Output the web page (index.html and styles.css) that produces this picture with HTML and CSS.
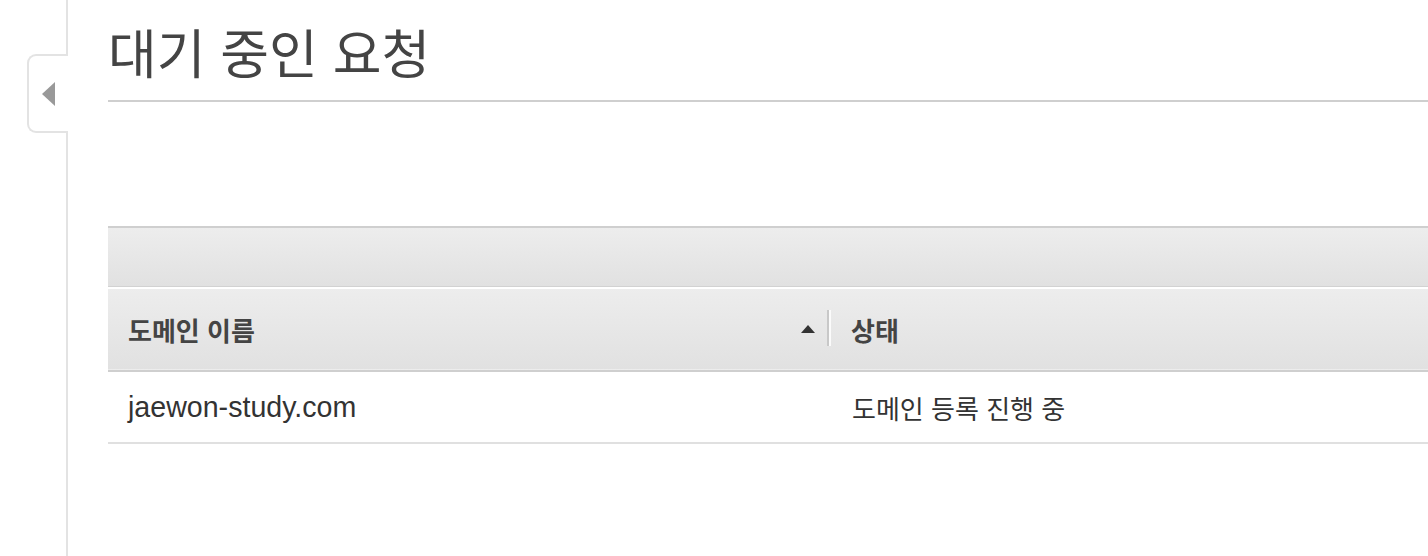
FILE: index.html
```html
<!DOCTYPE html>
<html lang="ko">
<head>
<meta charset="utf-8">
<title>대기 중인 요청</title>
<link rel="stylesheet" href="styles.css">
</head>
<body>
<div class="page">
  <aside class="sidebar">
    <button class="sidebar-toggle" type="button" aria-label="collapse">
      <svg class="toggle-icon" width="13" height="24" viewBox="0 0 13 24"><path d="M13 0 L0 12 L13 24 Z" fill="#999"/></svg>
    </button>
  </aside>
  <main class="content">
    <h1 class="title">대기 중인 요청</h1>
    <div class="grid">
      <div class="grid-toolbar"></div>
      <table class="grid-table">
        <thead>
          <tr class="head-row">
            <th class="col-name">
              <div class="head-cell">
                <span class="head-label">도메인 이름</span>
                <svg class="sort-icon" width="16" height="10" viewBox="0 0 16 10"><path d="M8 1 L15 9 L1 9 Z" fill="#333"/></svg>
                <span class="resizer"></span>
              </div>
            </th>
            <th class="col-status">
              <div class="head-cell"><span class="head-label">상태</span></div>
            </th>
          </tr>
        </thead>
        <tbody>
          <tr class="body-row">
            <td class="cell cell-domain">jaewon-study.com</td>
            <td class="cell cell-status">도메인 등록 진행 중</td>
          </tr>
        </tbody>
      </table>
    </div>
  </main>
</div>
</body>
</html>
```
FILE: styles.css
```css
* { box-sizing: border-box; }
html, body { margin: 0; padding: 0; background: #fff; }
body {
  font-family: "Noto Sans CJK KR", "Liberation Sans", sans-serif;
  color: #333;
  overflow: hidden;
}
.page {
  display: flex;
  min-height: 556px;
}
.sidebar {
  position: relative;
  flex: 0 0 68px;
  border-right: 2px solid #e3e3e3;
}
.sidebar-toggle {
  position: absolute;
  left: 27px;
  top: 54px;
  width: 41px;
  height: 79px;
  padding: 0 0 0 13px;
  margin: 0;
  background: #fff;
  border: 2px solid #e3e3e3;
  border-right: none;
  border-radius: 9px 0 0 9px;
  display: flex;
  align-items: center;
  cursor: pointer;
}
.toggle-icon { display: block; }
.content {
  flex: 1 1 auto;
  padding-left: 40px;
  min-width: 0;
}
.title {
  margin: 0;
  padding-top: 19px;
  height: 102px;
  font-size: 53px;
  font-weight: 400;
  line-height: 64px;
  color: #444;
  border-bottom: 2px solid #cfcfcf;
  letter-spacing: 0;
}
.grid {
  margin-top: 124px;
}
.grid-toolbar {
  height: 61px;
  border-top: 2px solid #cfcfcf;
  border-bottom: 1px solid #d2d2d2;
  background: linear-gradient(#ededed, #e1e1e1);
}
.grid-table {
  width: 100%;
  border-collapse: collapse;
  border-top: 2px solid #fff;
}
.head-row {
  background: linear-gradient(#ededed, #e1e1e1);
  border-bottom: 2px solid #cfcfcf;
}
.head-row th {
  padding: 0;
  height: 83px;
  text-align: left;
  font-weight: 700;
  font-size: 26px;
  color: #444;
}
.col-name { width: 723px; }
.head-cell {
  display: flex;
  align-items: center;
  height: 81px;
  padding-left: 20px;
}
.head-label { flex: 1 1 auto; }
.sort-icon { display: block; margin-right: 11px; margin-top: -2px; }
.resizer {
  width: 4px;
  height: 36px;
  border-left: 2px solid #c8c8c8;
  border-right: 2px solid #fbfbfb;
  margin-top: -3px;
}
.body-row { border-bottom: 2px solid #e0e0e0; }
.cell {
  height: 72px;
  padding: 0 0 0 20px;
  font-size: 26px;
  color: #333;
  vertical-align: middle;
}
.cell-domain {
  font-family: "Liberation Sans", "Noto Sans CJK KR", sans-serif;
  font-size: 28.6px;
}
.cell-status { padding-left: 21px; }
```
